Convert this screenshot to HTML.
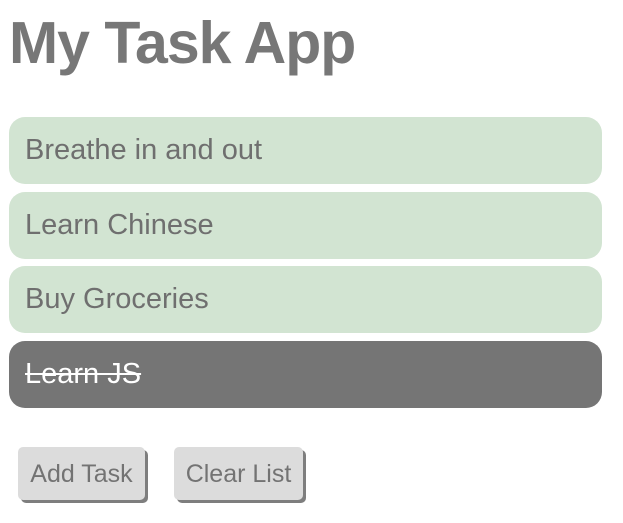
<!DOCTYPE html>
<html><head><style>
body{margin:0;background:#fff;font-family:"Liberation Sans",sans-serif;color:#767676;width:623px;height:523px;overflow:hidden;position:relative}
h1{position:absolute;left:9px;top:8px;margin:0;font-size:59px;font-weight:bold;letter-spacing:-1px;color:#777;line-height:70px}
.it{position:absolute;left:9px;width:593px;height:67px;border-radius:16px;background:#d2e4d2;box-sizing:border-box;padding-left:16px;font-size:29px;line-height:67px;color:#6f6f6f}
.done{background:#757575;color:#fff;text-decoration:line-through}
.b{position:absolute;top:447px;height:53px;border-radius:5px;background:#dcdcdc;box-shadow:3px 3px 0 #7e7e7e;font-size:25px;line-height:55px;text-align:center;color:#737373}
</style></head><body>
<h1>My Task App</h1>
<div class="it" style="top:117px">Breathe in and out</div>
<div class="it" style="top:192px">Learn Chinese</div>
<div class="it" style="top:266px">Buy Groceries</div>
<div class="it done" style="top:341px">Learn JS</div>
<div class="b" style="left:18px;width:127px">Add Task</div>
<div class="b" style="left:174px;width:129px">Clear List</div>
</body></html>
